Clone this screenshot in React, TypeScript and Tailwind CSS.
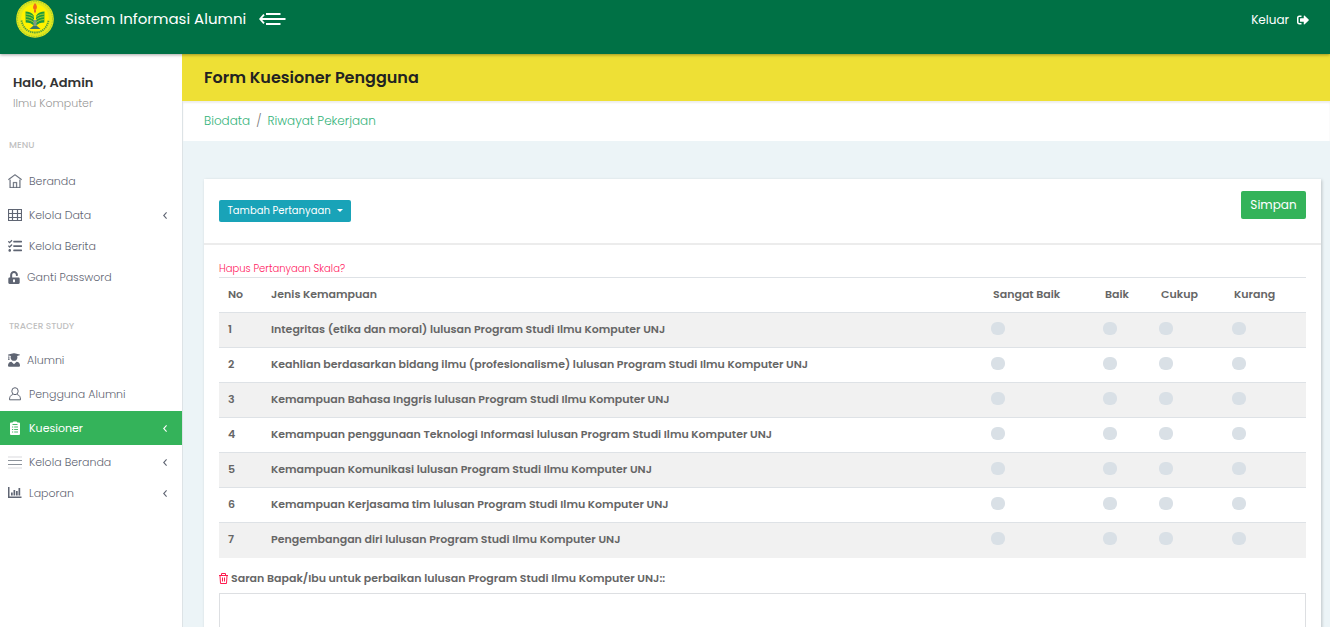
import React from "react";
import { FaTasks, FaUnlockAlt, FaUserGraduate, FaSignOutAlt } from "react-icons/fa";
import { TfiHome } from "react-icons/tfi";

function GridIcon() {
  return (
    <svg width="14" height="14" viewBox="0 0 14 14" fill="none" stroke="currentColor" strokeWidth="1.200" aria-hidden="true">
      <path d="M.5 1.5h13v11H.5zM.5 5.5h13M.5 9.5h13M4.500 1v12M9.500 1v12" />
    </svg>
  );
}

function PersonIcon() {
  return (
    <svg width="14" height="14" viewBox="0 0 14 14" fill="none" stroke="currentColor" strokeLinejoin="round" aria-hidden="true">
      <ellipse cx="7" cy="4.200" rx="3.200" ry="3.500" />
      <path d="M4.800 7.500C2.500 8.300 1.500 9.700 1.500 12.800h11c0-3.100-1-4.500-3.300-5.300" />
    </svg>
  );
}

function ClipboardIcon() {
  return (
    <svg width="12" height="14" viewBox="0 0 12 14" aria-hidden="true">
      <path d="M2 1.500h1.500L4.500.5h3l1 1H10a1 1 0 011 1V13a1 1 0 01-1 1H2a1 1 0 01-1-1V2.500a1 1 0 011-1z" fill="currentColor" />
      <path d="M3.500 3.500h5M3 6h1.200M5.200 6H9M3 8.500h1.200M5.200 8.500H9M3 11h1.200M5.200 11H9" stroke="#34b35a" strokeWidth=".9" />
    </svg>
  );
}

function MenuLinesIcon() {
  return (
    <svg width="14" height="14" viewBox="0 0 14 14" aria-hidden="true">
      <path d="M0 1h14v2H0zM0 12h14v2H0z" fill="#ececee" />
      <path d="M0 5h14v1H0zM0 9h14v1H0z" fill="#8d939b" />
    </svg>
  );
}

function ChartIcon() {
  return (
    <svg width="14" height="12" viewBox="0 0 14 12" fill="currentColor" aria-hidden="true">
      <path d="M0 0h1.500v9.500H13.500V11H0zM3 5.500h1.700V8.500H3zM5.500 3h1.700v5.500H5.500zM8 4h1.700v4.500H8zM10.500 1h1.700v7.500h-1.700z" />
    </svg>
  );
}

function ChevronIcon() {
  return (
    <svg width="4" height="7" viewBox="0 0 4 7" fill="none" stroke="currentColor" strokeWidth="1.100" aria-hidden="true">
      <path d="M3.600.4L.700 3.500l2.900 3.100" />
    </svg>
  );
}

function TrashIcon() {
  return (
    <svg width="9" height="11" viewBox="0 0 9 11" fill="none" stroke="currentColor" aria-hidden="true">
      <path d="M0 2.500h9M2.500 2.500v-2h4v2M1 2.500l.5 8h6l.5-8M3.500 4.500v4M5.500 4.500v4" />
    </svg>
  );
}

function CollapseIcon() {
  return (
    <svg width="28" height="14" viewBox="0 0 28 14" fill="none" stroke="currentColor" strokeWidth="1.800" aria-hidden="true">
      <path d="M7 2h14.500M1 7h25.500M7 12h14.500M5 2.700L1.200 7 5 11.300" />
    </svg>
  );
}

function Leaf({ flip }: { flip?: boolean }) {
  return (
    <g transform={flip ? "translate(38 0) scale(-1 1)" : undefined}>
      <path d="M18 16C16 12.500 13 11.500 9.500 11.500l.2 11c3.500 0 6.500 1 8.300 3.500z" fill="#1f9a3c" />
      <path d="M9.700 14c3.500.2 6.500 1.200 8.500 3.500M9.700 16.700c3.500.2 6.500 1.200 8.500 3.500M9.700 19.500c3.500.2 6.500 1.200 8.500 3.500" stroke="#d5e526" strokeWidth=".7" fill="none" />
    </g>
  );
}

function Logo() {
  return (
    <svg width="38" height="38" viewBox="0 0 38 38" aria-hidden="true">
      <circle cx="19" cy="19" r="18.800" fill="#e4e81c" />
      <circle cx="19" cy="19" r="17.500" fill="none" stroke="#9fc52c" strokeWidth="1" strokeDasharray="1.500 1" />
      <circle cx="19" cy="18" r="13.800" fill="#fff200" />
      <path d="M5.500 20.500C7 28 12 32.500 19 32.500S31 28 32.500 20.500" fill="none" stroke="#4f9d3a" strokeWidth="1.800" strokeDasharray="1.300 .8" />
      <Leaf />
      <Leaf flip />
      <path d="M17.500 20h3v6.500h-3z" fill="#7c9c84" />
      <path d="M13.500 29l3.500-3h4l3.500 3z" fill="#3b7665" />
      <path d="M19 3c2.300 2.500 2.300 4.500 1.200 6.500h-2.400C16.200 7.500 17.200 5.500 19 3z" fill="#f26a1b" />
      <path d="M18.300 9.500h1.400v3h-1.400z" fill="#d8392b" />
    </svg>
  );
}

type Item = {
  label: string;
  icon: React.ReactNode;
  arrow?: boolean;
  active?: boolean;
  short?: boolean;
  narrow?: boolean;
};

const menuItems: Item[] = [
  { label: "Beranda", icon: <TfiHome size={14} strokeWidth={0.3} stroke="currentColor" /> },
  { label: "Kelola Data", icon: <GridIcon />, arrow: true, short: true },
  { label: "Kelola Berita", icon: <FaTasks size={14} />, short: true },
  { label: "Ganti Password", icon: <FaUnlockAlt size={13} />, short: true, narrow: true },
];

const tracerItems: Item[] = [
  { label: "Alumni", icon: <FaUserGraduate size={14} />, narrow: true },
  { label: "Pengguna Alumni", icon: <PersonIcon /> },
  { label: "Kuesioner", icon: <ClipboardIcon />, arrow: true, active: true },
  { label: "Kelola Beranda", icon: <MenuLinesIcon />, arrow: true, short: true },
  { label: "Laporan", icon: <ChartIcon />, arrow: true },
];

function NavList({ items }: { items: Item[] }) {
  return (
    <ul>
      {items.map((item) => (
        <li key={item.label}>
          <a
            href="#"
            className={`flex items-center gap-[7px] pl-2 pr-[15px] pt-2 text-[11px] leading-[18px] ${item.short ? "pb-[5px]" : "pb-2"} ${
              item.active ? "bg-[#34b35a] text-white" : "text-[#5f6573]"
            }`}
          >
            <span className={`flex justify-center ${item.narrow ? "w-3" : "w-[14px]"}`}>{item.icon}</span>
            <span className={`flex-1 ${item.active ? "font-normal" : "font-light"}`}>{item.label}</span>
            {item.arrow && <ChevronIcon />}
          </a>
        </li>
      ))}
    </ul>
  );
}

const questions = [
  "Integritas (etika dan moral) lulusan Program Studi Ilmu Komputer UNJ",
  "Keahlian berdasarkan bidang ilmu (profesionalisme) lulusan Program Studi Ilmu Komputer UNJ",
  "Kemampuan Bahasa Inggris lulusan Program Studi Ilmu Komputer UNJ",
  "Kemampuan penggunaan Teknologi Informasi lulusan Program Studi Ilmu Komputer UNJ",
  "Kemampuan Komunikasi lulusan Program Studi Ilmu Komputer UNJ",
  "Kemampuan Kerjasama tim lulusan Program Studi Ilmu Komputer UNJ",
  "Pengembangan diri lulusan Program Studi Ilmu Komputer UNJ",
];

const ratings = ["Sangat Baik", "Baik", "Cukup", "Kurang"];

export default function App() {
  return (
    <div className="flex h-screen flex-col overflow-hidden bg-[#ecf4f7] font-['Poppins','Inter',sans-serif] text-[#666]">
      <header className="z-10 flex h-[54px] shrink-0 items-start justify-between bg-[#007145] pl-4 pr-[21px] text-white shadow-[0_1px_3px_rgba(0,0,0,0.35)]">
        <div className="flex h-[38px] items-center">
          <Logo />
          <span className="ml-[11px] text-[15px]">Sistem Informasi Alumni</span>
          <button type="button" aria-label="Menu" className="ml-[13px]">
            <CollapseIcon />
          </button>
        </div>
        <a href="#" className="flex h-[39px] items-center gap-2 text-[12px]">
          Keluar
          <FaSignOutAlt size={12} />
        </a>
      </header>

      <div className="flex min-h-0 flex-1">
        <aside className="w-[182px] shrink-0 bg-white">
          <div className="pl-[13px] pt-[19px]">
            <p className="text-[13px] font-semibold leading-[20px] text-[#333]">Halo, Admin</p>
            <p className="text-[11px] font-light leading-[20px] text-[#999]">Ilmu Komputer</p>
          </div>
          <h2 className="mb-[9px] mt-[22px] pl-[9px] text-[9px] font-medium leading-[20px] text-[#bfbfbf]">MENU</h2>
          <NavList items={menuItems} />
          <h2 className="mb-[7px] mt-[25px] pl-[9px] text-[9px] font-medium leading-[20px] text-[#bfbfbf]">TRACER STUDY</h2>
          <NavList items={tracerItems} />
        </aside>

        <main className="flex min-w-0 flex-1 flex-col">
          <h1 className="flex h-[47px] shrink-0 items-center bg-[#eee035] pl-[22px] text-[16px] font-semibold text-[#222]">
            Form Kuesioner Pengguna
          </h1>
          <div className="flex-1 border-l border-[#dde3e6]">
            <nav className="flex h-[40px] items-center gap-[6px] bg-white pl-[21px] text-[12px] font-light text-[#34b37a] shadow-[inset_0_2px_2px_rgba(0,0,0,0.07)]">
              <a href="#">Biodata</a>
              <span className="text-[#777]">/</span>
              <a href="#">Riwayat Pekerjaan</a>
            </nav>

            <form className="ml-[21px] mr-[9px] mt-[38px] bg-white shadow-[1px_1px_3px_rgba(0,0,0,0.2)]">
              <div className="flex h-[66px] items-start justify-between border-b-2 border-[#ececec] px-[15px] pt-[12px]">
                <button type="button" className="mt-[9px] flex h-[22px] w-[132px] items-center justify-center gap-[6px] rounded-xs bg-[#19a3b8] pb-px text-[10px] text-white">
                  Tambah Pertanyaan
                  <svg width="6" height="3" viewBox="0 0 6 3" fill="currentColor" aria-hidden="true">
                    <path d="M0 0h6L3 3z" />
                  </svg>
                </button>
                <button type="submit" className="h-[28px] w-[65px] rounded-xs bg-[#34b35a] text-[12px] text-white">
                  Simpan
                </button>
              </div>

              <div className="px-[15px] pt-[15px]">
                <a href="#" className="block text-[10px] font-light leading-[17px] text-[#ff1a5e]">
                  Hapus Pertanyaan Skala?
                </a>
                <table className="w-full table-fixed border-collapse text-left text-[11px]">
                  <colgroup>
                    <col className="w-[43px]" />
                    <col />
                    <col className="w-[112px]" />
                    <col className="w-[56px]" />
                    <col className="w-[73px]" />
                    <col className="w-[81px]" />
                  </colgroup>
                  <thead>
                    <tr className="h-[35px] border-t border-[#dee2e6]">
                      <th className="pb-[2px] pl-[9px] font-semibold">No</th>
                      <th className="pb-[2px] pl-[9px] font-semibold">Jenis Kemampuan</th>
                      {ratings.map((rating) => (
                        <th key={rating} className="pb-[2px] pl-[9px] font-semibold">{rating}</th>
                      ))}
                    </tr>
                  </thead>
                  <tbody>
                    {questions.map((question, index) => (
                      <tr key={question} className="h-[35px] border-t border-[#dee2e6] odd:bg-[#f1f1f1]">
                        <th className="pb-[2px] pl-[9px] font-semibold">{index + 1}</th>
                        <th className="pb-[2px] pl-[9px] font-semibold">{question}</th>
                        {ratings.map((rating) => (
                          <td key={rating} className="pb-[4px] pl-[7px]">
                            <input
                              type="radio"
                              name={`question-${index + 1}`}
                              value={rating}
                              aria-label={`${question}: ${rating}`}
                              className="block h-[13px] w-[14px] appearance-none rounded-[6px] bg-[#d9e0e6] checked:bg-[#34b35a]"
                            />
                          </td>
                        ))}
                      </tr>
                    ))}
                  </tbody>
                </table>
                <div className="mt-[11px] flex h-[20px] items-center gap-[3px] text-[11px] font-semibold">
                  <button type="button" aria-label="Hapus" className="text-[#ff1a4e]">
                    <TrashIcon />
                  </button>
                  <label htmlFor="saran">Saran Bapak/Ibu untuk perbaikan lulusan Program Studi Ilmu Komputer UNJ::</label>
                </div>
                <textarea id="saran" rows={4} className="mt-1 block w-full resize-none border border-[#dddfe2] p-2 text-[11px]" />
              </div>
            </form>
          </div>
        </main>
      </div>
    </div>
  );
}
